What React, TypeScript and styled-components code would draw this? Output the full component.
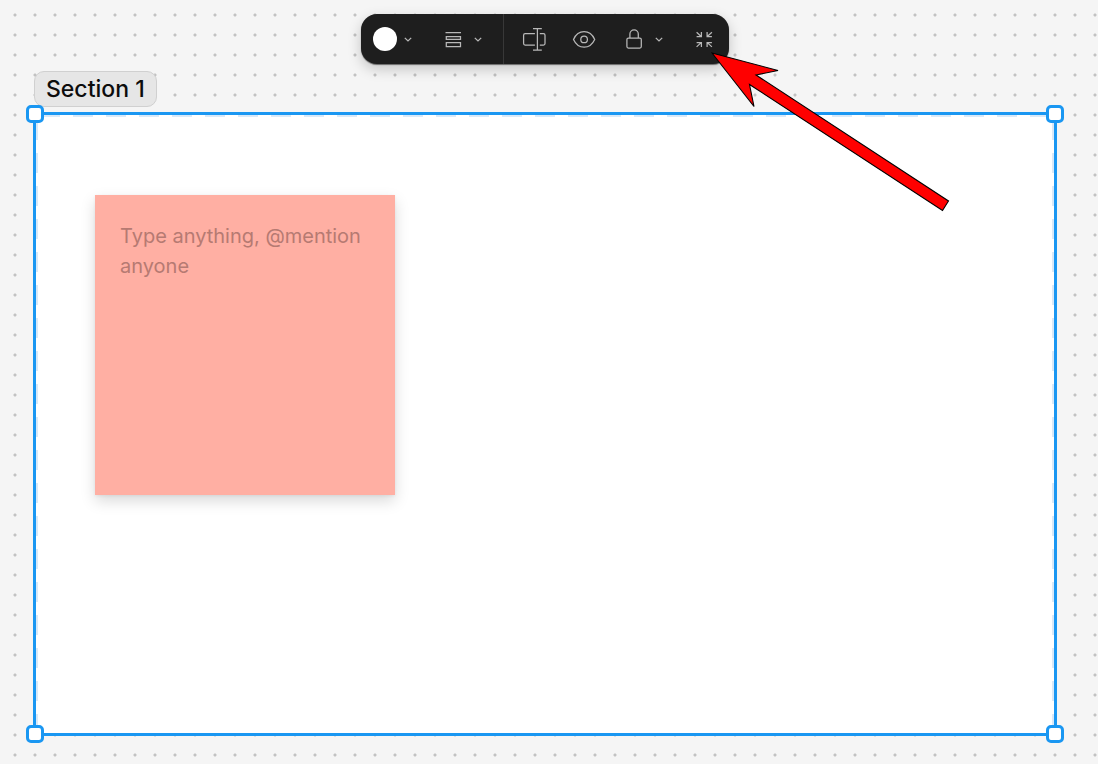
import React from 'react';
import styled, { createGlobalStyle, css } from 'styled-components';

const blue = '#1a97f2';

const GlobalStyle = createGlobalStyle`
  *, *::before, *::after { box-sizing: border-box; }
  body { margin: 0; font-family: Inter, 'Liberation Sans', sans-serif; }
  button { border: 0; padding: 0; background: none; color: inherit; font: inherit; cursor: pointer; }
`;

const Board = styled.main`
  display: flex;
  flex-direction: column;
  min-height: 100vh;
  padding: 14px 41px 28px 33px;
  background: #f5f5f5 radial-gradient(circle at 10px 10px, #c2c2c2 1px, transparent 2px) 5px 5px / 20px 20px;
`;

const Toolbar = styled.div`
  position: relative;
  z-index: 2;
  align-self: center;
  display: flex;
  height: 50px;
  border-radius: 16px;
  background: #1e1e1e;
  color: #b8b8b8;
  box-shadow: 0 5px 14px rgba(0, 0, 0, 0.2), 0 1px 1px rgba(0, 0, 0, 0.5);
`;

const ToolGroup = styled.div<{ $divided?: boolean }>`
  display: flex;
  align-items: center;
  gap: ${p => (p.$divided ? 26 : 27)}px;
  padding: ${p => (p.$divided ? '0 14px 0 18px' : '0 19px 0 12px')};
  ${p => p.$divided && css`border-left: 1px solid #383838;`}
`;

const ToolButton = styled.button<{ $gap?: number }>`
  display: flex;
  align-items: center;
  gap: ${p => p.$gap ?? 7}px;
  height: 24px;
`;

const Swatch = styled.span`
  width: 24px;
  height: 24px;
  border-radius: 50%;
  background: #fff;
`;

const Svg = styled.svg`
  display: block;
  flex: none;
  fill: none;
  stroke: currentColor;
`;

const Arrow = styled.svg`
  position: absolute;
  left: 350px;
  top: 38px;
  pointer-events: none;
`;

const Title = styled.h1`
  align-self: flex-start;
  margin: 7px 0 5px 1px;
  padding: 0 11px;
  border: 1px solid #d0d0d0;
  border-radius: 10px;
  background: #e6e6e6;
  color: #0c0c0c;
  font-size: 23px;
  font-weight: 500;
  line-height: 34px;
`;

const dash = '#d9e9f8 0 20px, transparent 20px 33px';

const Section = styled.section`
  position: relative;
  flex: 1;
  padding: 80px 59px;
  border: 3px solid ${blue};
  background:
    repeating-linear-gradient(90deg, ${dash}) 4px 0 / 100% 2px no-repeat,
    repeating-linear-gradient(180deg, ${dash}) 0 5px / 2px 100% no-repeat,
    repeating-linear-gradient(180deg, ${dash}) 100% 5px / 2px 100% no-repeat,
    #fff;
  background-clip: padding-box;
`;

const Handle = styled.span<{ $bottom?: boolean; $right?: boolean }>`
  position: absolute;
  ${p => (p.$bottom ? 'bottom' : 'top')}: -10px;
  ${p => (p.$right ? 'right' : 'left')}: -10px;
  width: 18px;
  height: 18px;
  border: 3px solid ${blue};
  border-radius: 5px;
  background: #fff;
`;

const Sticky = styled.textarea`
  display: block;
  width: 300px;
  height: 300px;
  padding: 26px 25px;
  border: 0;
  outline: 0;
  resize: none;
  background: #ffafa3;
  color: #1e1e1e;
  font: 400 20px/30px Inter, 'Liberation Sans', sans-serif;
  box-shadow: 0 6px 14px rgba(0, 0, 0, 0.15), 0 1px 3px rgba(0, 0, 0, 0.06);

  &::placeholder { color: #b67a72; opacity: 1; }
`;

const Chevron = () => (
  <Svg width="12" height="12" viewBox="0 0 12 12" strokeWidth="1.3">
    <path d="M2.8 4.9 6 7.9 9.2 4.9" />
  </Svg>
);

const Icon = ({ children }: { children: React.ReactNode }) => (
  <Svg width="24" height="24" viewBox="0 0 24 24" strokeWidth="1.25">{children}</Svg>
);

export default function App() {
  return (
    <>
      <GlobalStyle />
      <Board>
        <Toolbar role="toolbar" aria-label="Section tools">
          <ToolGroup>
            <ToolButton $gap={5} aria-label="Section color">
              <Swatch />
              <Chevron />
            </ToolButton>
            <ToolButton aria-label="Arrange">
              <Icon>
                <path d="M4.5 5.5h15.5M5.3 9.5h14.2v2.8H5.3zM5.3 15.5h14.2v4H5.3z" />
              </Icon>
              <Chevron />
            </ToolButton>
          </ToolGroup>
          <ToolGroup $divided>
            <ToolButton aria-label="Rename">
              <Icon>
                <path d="M12.9 6.7H3.1a1.5 1.5 0 0 0-1.5 1.5v8.4a1.5 1.5 0 0 0 1.5 1.5h9.8M17.8 6.7h3.7A1.5 1.5 0 0 1 23 8.2v8.4a1.5 1.5 0 0 1-1.5 1.5h-3.7M15.4 1.6v21.6M11 1.6h8.8M11 23.2h8.8" />
              </Icon>
            </ToolButton>
            <ToolButton aria-label="Hide contents">
              <Icon>
                <path d="M1.5 12.4C3.8 7.4 7.5 4.7 12.1 4.7S20.4 7.4 22.7 12.4c-2.3 5-6 7.7-10.6 7.7S3.8 17.4 1.5 12.4Z" />
                <circle cx="12.1" cy="12.4" r="3.3" />
              </Icon>
            </ToolButton>
            <ToolButton aria-label="Lock">
              <Icon>
                <rect x="4.9" y="11" width="14.4" height="10" rx="1.5" />
                <path d="M7.9 11V7.1a4.2 4.2 0 0 1 8.4 0V11" />
              </Icon>
              <Chevron />
            </ToolButton>
            <ToolButton aria-label="Collapse section">
              <Icon>
                <path d="M5.6 5.2l4.6 4.3M10.4 5v4.6H5.6M20.9 5.2l-4.6 4.3M16.1 5v4.6h4.8M5.6 19.9l4.6-4.3M10.4 20.1v-4.6H5.6M20.9 19.9l-4.6-4.3M16.1 20.1v-4.6h4.8" />
              </Icon>
            </ToolButton>
          </ToolGroup>
          <Arrow width="240" height="162" viewBox="0 0 240 162" aria-hidden="true">
            <path
              d="M1 1 67 18.5 45 23 237.5 149 231.5 158.5 38.5 32.5 43 54.5Z"
              fill="#f00"
              stroke="#000"
              strokeWidth="1.1"
            />
          </Arrow>
        </Toolbar>
        <Title>Section 1</Title>
        <Section>
          <Sticky aria-label="Sticky note" placeholder="Type anything, @mention anyone" />
          <Handle />
          <Handle $right />
          <Handle $bottom />
          <Handle $bottom $right />
        </Section>
      </Board>
    </>
  );
}
